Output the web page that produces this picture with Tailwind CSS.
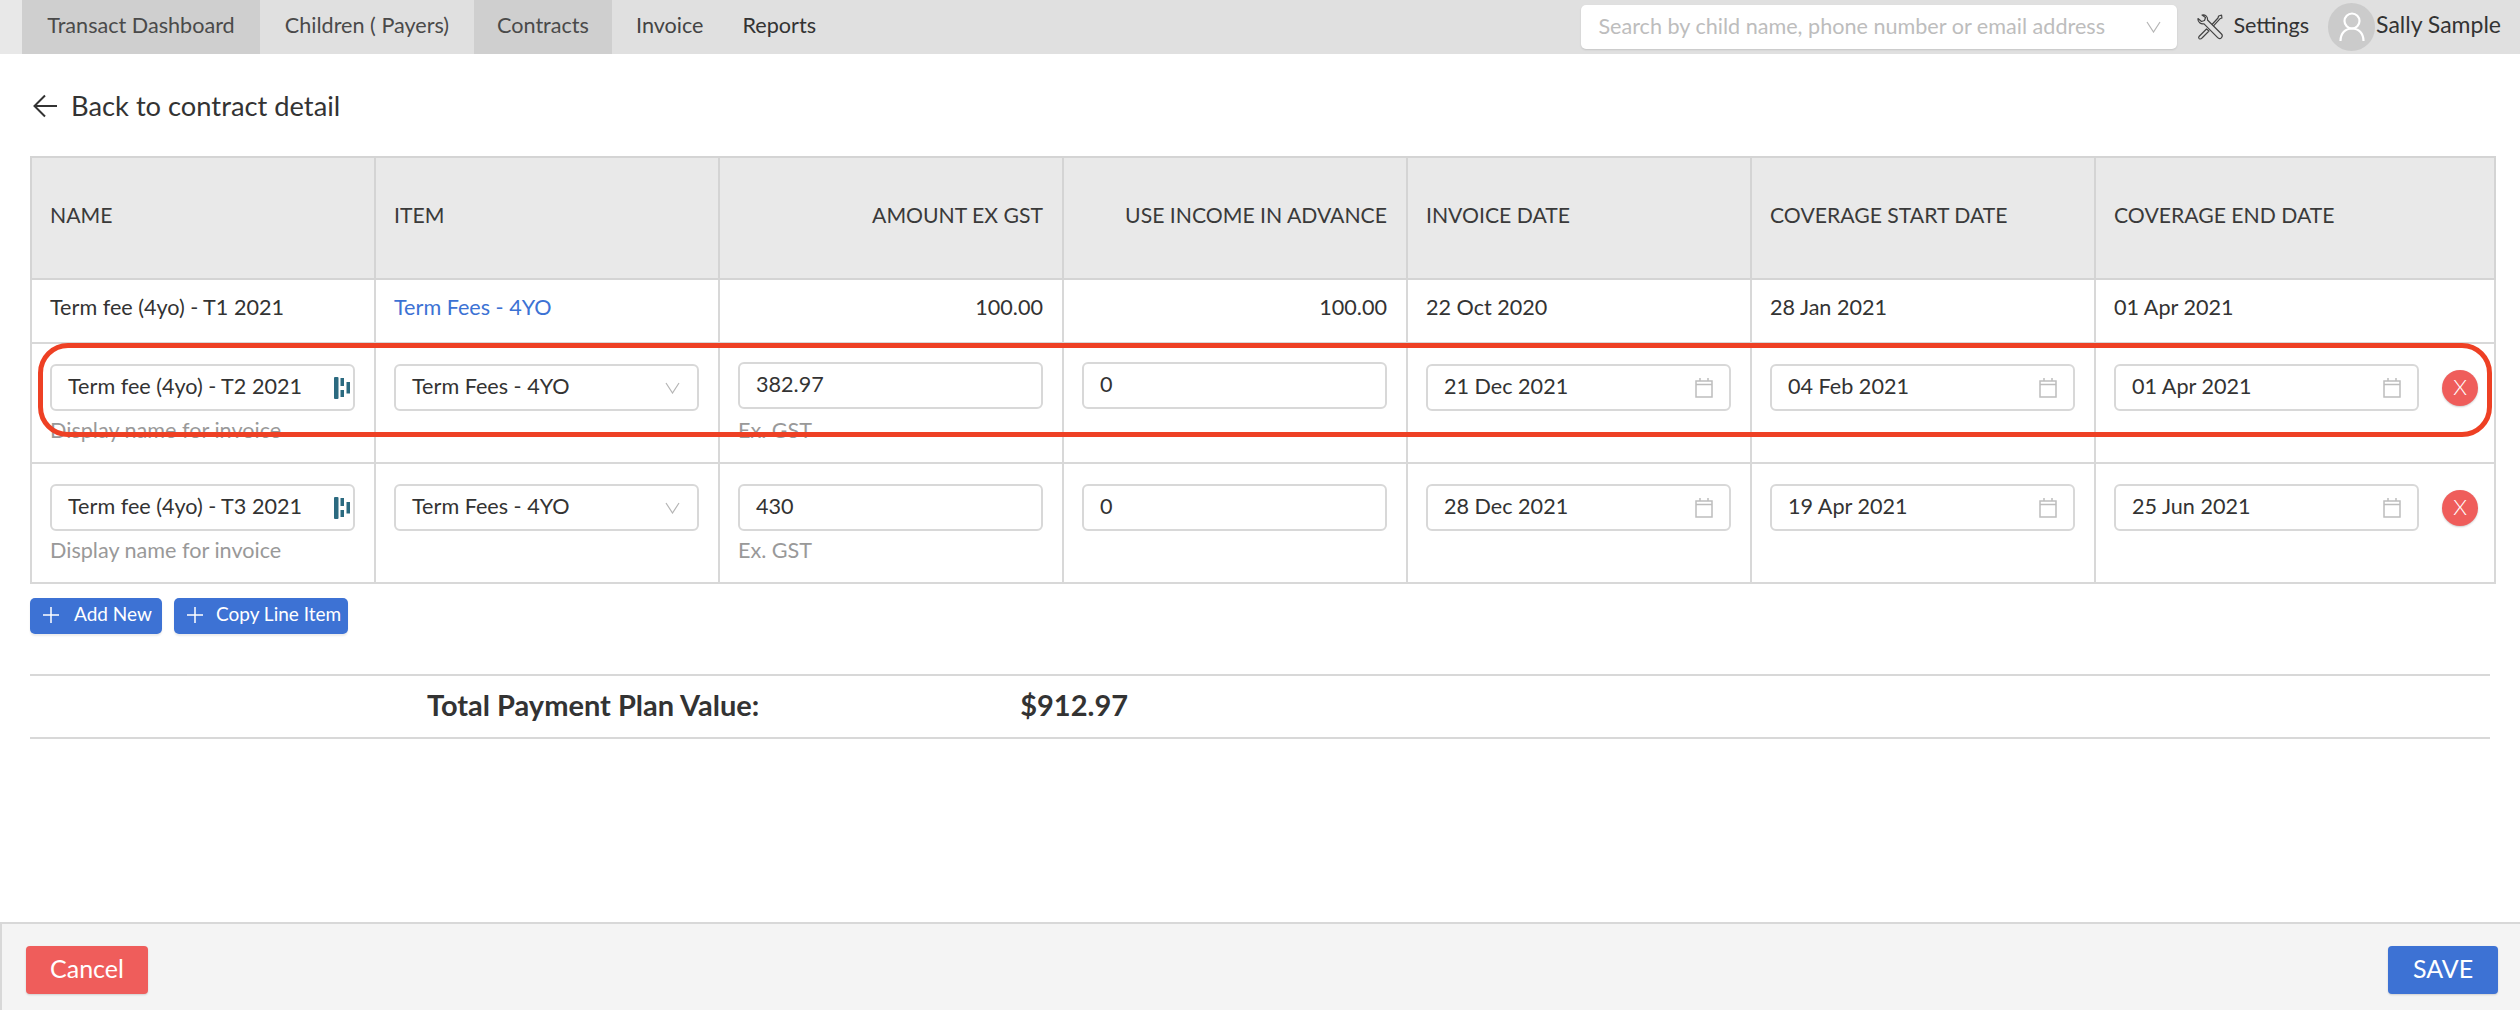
<!DOCTYPE html>
<html lang="en">
  <head>
    <meta charset="UTF-8" />
    <title>Contract payment plan</title>
    <script src="https://cdn.jsdelivr.net/npm/@tailwindcss/browser@4"></script>
  </head>
  <body class="relative h-[1010px] w-[2520px] overflow-hidden bg-white font-['Lato',sans-serif] text-[21.6px] text-[#333]">
    <!-- top nav -->
    <header class="flex h-[54px] items-stretch bg-[#e0e0e0]">
      <div class="w-[22px] bg-[#e8e8e8]"></div>
      <nav class="flex items-stretch">
        <a class="flex w-[238px] items-center justify-center bg-[#cfcfcf] pb-[4px] text-[#4a4a4a]">Transact Dashboard</a>
        <a class="flex w-[214px] items-center justify-center pb-[4px] text-[#4a4a4a]">Children ( Payers)</a>
        <a class="flex w-[138px] items-center justify-center bg-[#cfcfcf] pb-[4px] text-[#4a4a4a]">Contracts</a>
        <a class="ml-[24px] flex items-center pb-[4px] text-[#444]">Invoice</a>
        <a class="ml-[39px] flex items-center pb-[4px] text-[#333]">Reports</a>
      </nav>
      <div class="ml-auto flex items-center">
        <div class="flex h-[44px] w-[596px] items-center rounded-[5px] bg-white pr-[16px] pb-[1px] pl-[17px] text-[#bdbdbd] shadow-[0_1px_2px_rgba(0,0,0,0.12)]">
          <span class="flex-1">Search by child name, phone number or email address</span>
          <svg class="h-[12px] w-[15px]" viewBox="0 0 15 12" fill="none" stroke="#b5b5b5" stroke-width="1.2"><path d="M1 1l6.5 10L14 1" /></svg>
        </div>
        <svg class="ml-[19px] h-[26px] w-[28px]" viewBox="0 0 28 26" fill="none" stroke="#444" stroke-width="1.2" stroke-linejoin="round">
          <path d="M2 4.5l3.5 3 3-1 1-3L6 1c3-.8 6 1.500 5.500 5l14 14c1.200 1.400.6 3-.2 3.800-.9.9-2.400 1.200-3.600-.1L8 9.800C5 10.500 1.500 8 2 4.500z" />
          <path d="M16 10.500L22 4l.6-2 3-.8.3 2.800-2 .8-6.400 7M10.500 15L3 22.500c-.8 1 0 2.500 1 2.500s1.500-.3 2-1L13 17z" />
        </svg>
        <span class="ml-[9px] pb-[3px] text-[#333]">Settings</span>
        <div class="ml-[19px] flex h-[48px] w-[47px] items-center justify-center rounded-full bg-[#cbcbcb]">
          <svg class="h-[32px] w-[26px]" viewBox="0 0 26 32" fill="none" stroke="#fff" stroke-width="2.200"><circle cx="13" cy="10" r="7.500" /><path d="M1.500 30c0-8 5-12.500 11.500-12.500S24.500 22 24.500 30" /></svg>
        </div>
        <span class="mr-[19px] ml-[1px] pb-[6px] text-[23px] text-[#333]">Sally Sample</span>
      </div>
    </header>

    <main class="px-[30px]">
      <a class="flex h-[102px] items-center pt-[2px] pl-[3px] text-[27.3px] text-[#333]">
        <svg class="mr-[13px] h-[24px] w-[25px]" viewBox="0 0 25 24" fill="none" stroke="#333" stroke-width="2"><path d="M24 12H2M12 1.500L1.500 12 12 22.500" /></svg>
        Back to contract detail
      </a>

      <table class="w-[2464px] table-fixed border-collapse">
        <colgroup>
          <col class="w-[344px]" /><col class="w-[344px]" /><col class="w-[344px]" /><col class="w-[344px]" /><col class="w-[344px]" /><col class="w-[344px]" /><col class="w-[400px]" />
        </colgroup>
        <thead>
          <tr class="h-[122px] bg-[#e9e9e9] text-[21.2px] text-[#3a3a3a]">
            <th class="border-2 border-[#d4d4d4] px-[18px] pb-[4px] text-left font-normal">NAME</th>
            <th class="border-2 border-[#d4d4d4] px-[18px] pb-[4px] text-left font-normal">ITEM</th>
            <th class="border-2 border-[#d4d4d4] px-[19px] pb-[4px] text-right font-normal">AMOUNT EX GST</th>
            <th class="border-2 border-[#d4d4d4] px-[19px] pb-[4px] text-right font-normal">USE INCOME IN ADVANCE</th>
            <th class="border-2 border-[#d4d4d4] px-[18px] pb-[4px] text-left font-normal">INVOICE DATE</th>
            <th class="border-2 border-[#d4d4d4] px-[18px] pb-[4px] text-left font-normal">COVERAGE START DATE</th>
            <th class="border-2 border-[#d4d4d4] px-[18px] pb-[4px] text-left font-normal">COVERAGE END DATE</th>
          </tr>
        </thead>
        <tbody>
          <tr class="h-[64px]">
            <td class="border-2 border-[#d8d8d8] px-[18px] pb-[8px]">Term fee (4yo) - T1 2021</td>
            <td class="border-2 border-[#d8d8d8] px-[18px] pb-[8px] text-[#3c72d4]">Term Fees - 4YO</td>
            <td class="border-2 border-[#d8d8d8] px-[19px] pb-[8px] text-right">100.00</td>
            <td class="border-2 border-[#d8d8d8] px-[19px] pb-[8px] text-right">100.00</td>
            <td class="border-2 border-[#d8d8d8] px-[18px] pb-[8px]">22 Oct 2020</td>
            <td class="border-2 border-[#d8d8d8] px-[18px] pb-[8px]">28 Jan 2021</td>
            <td class="border-2 border-[#d8d8d8] px-[18px] pb-[8px]">01 Apr 2021</td>
          </tr>
          <tr class="h-[120px]">
            <td class="border-2 border-[#d8d8d8] px-[18px] pt-[20px] align-top">
              <div class="flex h-[47px] w-[305px] items-center rounded-[6px] border-2 border-[#d8d8d8] pr-[3px] pl-[16px]">
                <span class="flex-1 pb-[3px]">Term fee (4yo) - T2 2021</span>
                <svg class="h-[22px] w-[16px]" viewBox="0 0 16 22" fill="#2b6a80"><rect x="0" y="0" width="4.500" height="22" rx="1" /><rect x="6.500" y="1" width="3.500" height="8" /><rect x="6.500" y="13" width="3.500" height="7" /><rect x="12.500" y="5" width="3.500" height="11.500" /></svg>
              </div>
              <p class="mt-[3px] text-[#999]">Display name for invoice</p>
            </td>
            <td class="border-2 border-[#d8d8d8] px-[18px] pt-[20px] align-top">
              <div class="flex h-[47px] w-[305px] items-center rounded-[6px] border-2 border-[#d8d8d8] pr-[17px] pl-[16px]">
                <span class="flex-1 pb-[3px]">Term Fees - 4YO</span>
                <svg class="h-[12px] w-[15px]" viewBox="0 0 15 12" fill="none" stroke="#b5b5b5" stroke-width="1.200"><path d="M1 1l6.500 10L14 1" /></svg>
              </div>
            </td>
            <td class="border-2 border-[#d8d8d8] px-[18px] pt-[18px] align-top">
              <div class="flex h-[47px] w-[305px] items-center rounded-[6px] border-2 border-[#d8d8d8] pb-[2px] pl-[16px]">382.97</div>
              <p class="mt-[5px] text-[#999]">Ex. GST</p>
            </td>
            <td class="border-2 border-[#d8d8d8] px-[18px] pt-[18px] align-top">
              <div class="flex h-[47px] w-[305px] items-center rounded-[6px] border-2 border-[#d8d8d8] pb-[2px] pl-[16px]">0</div>
            </td>
            <td class="border-2 border-[#d8d8d8] px-[18px] pt-[20px] align-top">
              <div class="flex h-[47px] w-[305px] items-center rounded-[6px] border-2 border-[#d8d8d8] pr-[16px] pl-[16px]">
                <span class="flex-1 pb-[3px]">21 Dec 2021</span>
                <svg class="h-[20px] w-[18px]" viewBox="0 0 18 20" fill="none" stroke="#bdbdbd" stroke-width="1.500"><rect x="1" y="3" width="16" height="16" /><path d="M1 6.500h16M5 0v3M13 0v3" /></svg>
              </div>
            </td>
            <td class="border-2 border-[#d8d8d8] px-[18px] pt-[20px] align-top">
              <div class="flex h-[47px] w-[305px] items-center rounded-[6px] border-2 border-[#d8d8d8] pr-[16px] pl-[16px]">
                <span class="flex-1 pb-[3px]">04 Feb 2021</span>
                <svg class="h-[20px] w-[18px]" viewBox="0 0 18 20" fill="none" stroke="#bdbdbd" stroke-width="1.500"><rect x="1" y="3" width="16" height="16" /><path d="M1 6.500h16M5 0v3M13 0v3" /></svg>
              </div>
            </td>
            <td class="border-2 border-[#d8d8d8] pt-[20px] pl-[18px] align-top">
              <div class="flex items-center">
                <div class="flex h-[47px] w-[305px] items-center rounded-[6px] border-2 border-[#d8d8d8] pr-[16px] pl-[16px]">
                  <span class="flex-1 pb-[3px]">01 Apr 2021</span>
                  <svg class="h-[20px] w-[18px]" viewBox="0 0 18 20" fill="none" stroke="#bdbdbd" stroke-width="1.500"><rect x="1" y="3" width="16" height="16" /><path d="M1 6.500h16M5 0v3M13 0v3" /></svg>
                </div>
                <button class="ml-[23px] flex h-[36px] w-[36px] items-center justify-center rounded-full bg-[#ef5d5b] pb-[2px] text-[22px] font-light text-white shadow-[0_1px_2px_rgba(0,0,0,0.2)]">X</button>
              </div>
            </td>
          </tr>
          <tr class="h-[120px]">
            <td class="border-2 border-[#d8d8d8] px-[18px] pt-[20px] align-top">
              <div class="flex h-[47px] w-[305px] items-center rounded-[6px] border-2 border-[#d8d8d8] pr-[3px] pl-[16px]">
                <span class="flex-1 pb-[3px]">Term fee (4yo) - T3 2021</span>
                <svg class="h-[22px] w-[16px]" viewBox="0 0 16 22" fill="#2b6a80"><rect x="0" y="0" width="4.500" height="22" rx="1" /><rect x="6.500" y="1" width="3.500" height="8" /><rect x="6.500" y="13" width="3.500" height="7" /><rect x="12.500" y="5" width="3.500" height="11.500" /></svg>
              </div>
              <p class="mt-[3px] text-[#999]">Display name for invoice</p>
            </td>
            <td class="border-2 border-[#d8d8d8] px-[18px] pt-[20px] align-top">
              <div class="flex h-[47px] w-[305px] items-center rounded-[6px] border-2 border-[#d8d8d8] pr-[17px] pl-[16px]">
                <span class="flex-1 pb-[3px]">Term Fees - 4YO</span>
                <svg class="h-[12px] w-[15px]" viewBox="0 0 15 12" fill="none" stroke="#b5b5b5" stroke-width="1.200"><path d="M1 1l6.500 10L14 1" /></svg>
              </div>
            </td>
            <td class="border-2 border-[#d8d8d8] px-[18px] pt-[20px] align-top">
              <div class="flex h-[47px] w-[305px] items-center rounded-[6px] border-2 border-[#d8d8d8] pb-[2px] pl-[16px]">430</div>
              <p class="mt-[3px] text-[#999]">Ex. GST</p>
            </td>
            <td class="border-2 border-[#d8d8d8] px-[18px] pt-[20px] align-top">
              <div class="flex h-[47px] w-[305px] items-center rounded-[6px] border-2 border-[#d8d8d8] pb-[2px] pl-[16px]">0</div>
            </td>
            <td class="border-2 border-[#d8d8d8] px-[18px] pt-[20px] align-top">
              <div class="flex h-[47px] w-[305px] items-center rounded-[6px] border-2 border-[#d8d8d8] pr-[16px] pl-[16px]">
                <span class="flex-1 pb-[3px]">28 Dec 2021</span>
                <svg class="h-[20px] w-[18px]" viewBox="0 0 18 20" fill="none" stroke="#bdbdbd" stroke-width="1.500"><rect x="1" y="3" width="16" height="16" /><path d="M1 6.500h16M5 0v3M13 0v3" /></svg>
              </div>
            </td>
            <td class="border-2 border-[#d8d8d8] px-[18px] pt-[20px] align-top">
              <div class="flex h-[47px] w-[305px] items-center rounded-[6px] border-2 border-[#d8d8d8] pr-[16px] pl-[16px]">
                <span class="flex-1 pb-[3px]">19 Apr 2021</span>
                <svg class="h-[20px] w-[18px]" viewBox="0 0 18 20" fill="none" stroke="#bdbdbd" stroke-width="1.500"><rect x="1" y="3" width="16" height="16" /><path d="M1 6.500h16M5 0v3M13 0v3" /></svg>
              </div>
            </td>
            <td class="border-2 border-[#d8d8d8] pt-[20px] pl-[18px] align-top">
              <div class="flex items-center">
                <div class="flex h-[47px] w-[305px] items-center rounded-[6px] border-2 border-[#d8d8d8] pr-[16px] pl-[16px]">
                  <span class="flex-1 pb-[3px]">25 Jun 2021</span>
                  <svg class="h-[20px] w-[18px]" viewBox="0 0 18 20" fill="none" stroke="#bdbdbd" stroke-width="1.500"><rect x="1" y="3" width="16" height="16" /><path d="M1 6.500h16M5 0v3M13 0v3" /></svg>
                </div>
                <button class="ml-[23px] flex h-[36px] w-[36px] items-center justify-center rounded-full bg-[#ef5d5b] pb-[2px] text-[22px] font-light text-white shadow-[0_1px_2px_rgba(0,0,0,0.2)]">X</button>
              </div>
            </td>
          </tr>
        </tbody>
      </table>

      <div class="mt-[14px] flex gap-[12px]">
        <button class="flex h-[36px] w-[132px] items-center rounded-[5px] bg-[#3d72d4] pb-[3px] pl-[13px] text-[19px] text-white shadow-[0_2px_2px_rgba(0,0,0,0.08)]">
          <svg class="mr-[15px] h-[16px] w-[16px]" viewBox="0 0 16 16" stroke="#fff" stroke-width="1.500"><path d="M8 0v16M0 8h16" /></svg>
          Add New
        </button>
        <button class="flex h-[36px] w-[174px] items-center rounded-[5px] bg-[#3d72d4] pb-[3px] pl-[13px] text-[19px] text-white shadow-[0_2px_2px_rgba(0,0,0,0.08)]">
          <svg class="mr-[13px] h-[16px] w-[16px]" viewBox="0 0 16 16" stroke="#fff" stroke-width="1.500"><path d="M8 0v16M0 8h16" /></svg>
          Copy Line Item
        </button>
      </div>

      <div class="mt-[40px] flex h-[65px] items-center border-y-2 border-[#d8d8d8] pb-[4px] text-[29px] font-bold text-[#333]">
        <span class="ml-[397px]">Total Payment Plan Value:</span>
        <span class="ml-[261px]">$912.97</span>
      </div>
    </main>

    <!-- highlight drawn over the row -->
    <div class="pointer-events-none absolute top-[343px] left-[38px] h-[94px] w-[2454px] rounded-[30px] border-[5px] border-[#ee4024]"></div>

    <footer class="absolute right-0 bottom-0 left-0 flex h-[88px] items-start justify-between border-t-2 border-l-2 border-[#d8d8d8] bg-[#f4f4f4] pt-[22px] pr-[22px] pl-[24px]">
      <button class="h-[48px] w-[122px] rounded-[4px] bg-[#ef5d5b] pb-[2px] text-[25px] text-white shadow-[0_1px_2px_rgba(0,0,0,0.15)]">Cancel</button>
      <button class="h-[48px] w-[110px] rounded-[4px] bg-[#3d72d4] pb-[2px] text-[25px] text-white shadow-[0_1px_2px_rgba(0,0,0,0.15)]">SAVE</button>
    </footer>
  </body>
</html>
